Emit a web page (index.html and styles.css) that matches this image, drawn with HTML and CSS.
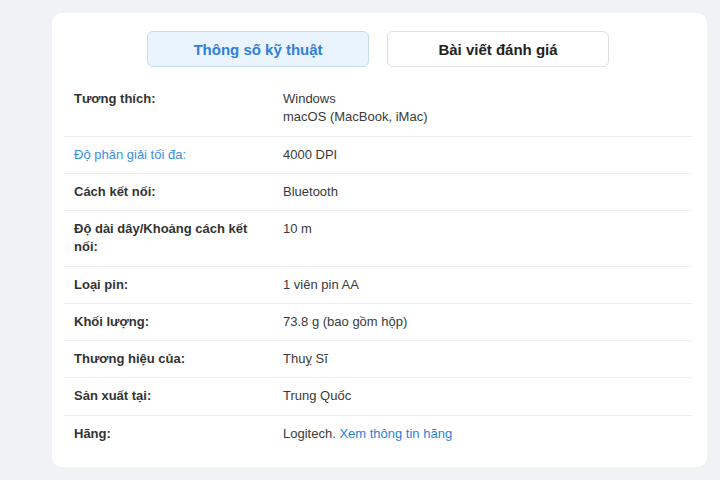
FILE: index.html
```html
<!DOCTYPE html>
<html lang="vi">
<head>
<meta charset="utf-8">
<link rel="stylesheet" href="styles.css">
</head>
<body>
<div class="card">
  <div class="tabs">
    <div class="tab active">Thông số kỹ thuật</div>
    <div class="tab">Bài viết đánh giá</div>
  </div>
  <div class="specs">
    <div class="row"><div class="label">Tương thích:</div><div class="value">Windows<br>macOS (MacBook, iMac)</div></div>
    <div class="row"><div class="label link">Độ phân giải tối đa:</div><div class="value">4000 DPI</div></div>
    <div class="row"><div class="label">Cách kết nối:</div><div class="value">Bluetooth</div></div>
    <div class="row"><div class="label">Độ dài dây/Khoảng cách kết nối:</div><div class="value">10 m</div></div>
    <div class="row"><div class="label">Loại pin:</div><div class="value">1 viên pin AA</div></div>
    <div class="row"><div class="label">Khối lượng:</div><div class="value">73.8 g (bao gồm hộp)</div></div>
    <div class="row"><div class="label">Thương hiệu của:</div><div class="value">Thuỵ Sĩ</div></div>
    <div class="row"><div class="label">Sản xuất tại:</div><div class="value">Trung Quốc</div></div>
    <div class="row last"><div class="label">Hãng:</div><div class="value">Logitech. <a class="vlink" href="#">Xem thông tin hãng</a></div></div>
  </div>
</div>
</body>
</html>
```
FILE: styles.css
```css
html, body {
  margin: 0;
  padding: 0;
  background: #f0f2f5;
  font-family: "Liberation Sans", Arial, sans-serif;
  color: #333;
}
body {
  padding: 13px 13px 0 52px;
}
.card {
  width: 655px;
  background: #fff;
  border-radius: 10px;
  padding: 18px 15px 15px 12px;
  box-sizing: border-box;
}
.tabs {
  display: flex;
  justify-content: center;
  gap: 18px;
  margin-bottom: 14px;
}
.tab {
  width: 222px;
  height: 36px;
  box-sizing: border-box;
  border: 1px solid #e0e0e0;
  border-radius: 6px;
  display: flex;
  align-items: center;
  justify-content: center;
  font-size: 15px;
  font-weight: bold;
  color: #222;
  background: #fff;
}
.tab.active {
  background: #eaf4fe;
  border-color: #c3dcf3;
  color: #2f80d8;
}
.row {
  display: grid;
  grid-template-columns: 209px 1fr;
  padding: 9px 10px;
  border-bottom: 1px solid #eceef0;
  font-size: 13px;
  line-height: 18.25px;
}
.row.last {
  border-bottom: none;
}
.label {
  font-weight: bold;
  color: #333;
  padding-right: 22px;
}
.label.link {
  font-weight: normal;
  color: #3a8ee0;
}
.value {
  color: #3a3a3a;
}
.vlink {
  color: #2f80d8;
  text-decoration: none;
}
```
